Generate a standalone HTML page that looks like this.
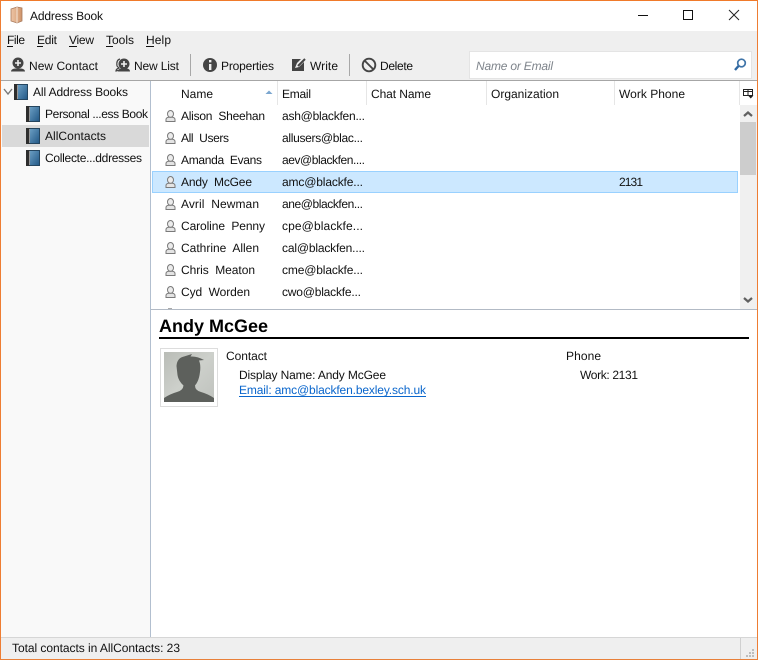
<!DOCTYPE html>
<html><head><meta charset="utf-8"><title>Address Book</title>
<style>
html,body{margin:0;padding:0;width:758px;height:660px;overflow:hidden;background:#fff}
svg{display:block}
text{font-family:"Liberation Sans",sans-serif;font-size:12px;fill:#111;white-space:pre;text-rendering:geometricPrecision}
</style></head><body>
<svg xmlns="http://www.w3.org/2000/svg" width="758" height="660" viewBox="0 0 758 660" xml:space="preserve">
<defs>
<linearGradient id="bk" x1="0" y1="0" x2="1" y2="1"><stop offset="0" stop-color="#6a9dc2"/><stop offset="1" stop-color="#245a88"/></linearGradient>
<linearGradient id="ph" x1="0" y1="0" x2="1" y2="1"><stop offset="0" stop-color="#b9bcb6"/><stop offset=".5" stop-color="#cdd0cb"/><stop offset="1" stop-color="#bfc2bd"/></linearGradient>
<linearGradient id="tb" x1="0" y1="0" x2="1" y2="0"><stop offset="0" stop-color="#eec5a6"/><stop offset="1" stop-color="#cf946a"/></linearGradient>
<g id="book"><rect x="0" y="0" width="14" height="16" fill="#fff"/><rect x="0" y="0" width="3.500" height="16" fill="#2e2e2e"/><rect x="4" y="1" width="9" height="14" fill="url(#bk)"/><path d="M3.500 .5H13.500V15.500H3.500" fill="none" stroke="#24455f"/></g>
<g id="person"><path d="M1 11.500V9.500Q1 7.800 3.500 7.300H7.500Q10 7.800 10 9.500V11.500Z" fill="#e4e4e4" stroke="#7a7a7a"/><ellipse cx="5.500" cy="3.900" rx="3" ry="3.400" fill="#ececec" stroke="#7a7a7a"/></g>
</defs>

<!-- backgrounds -->
<rect width="758" height="660" fill="#fff"/>
<rect x="1" y="31" width="756" height="49" fill="#efefef"/>
<rect x="1" y="80" width="756" height="1" fill="#a6a6a6"/>
<rect x="1" y="81" width="149" height="556" fill="#f9f9f9"/>
<rect x="150" y="81" width="1" height="556" fill="#b2bfcf"/>
<rect x="1" y="637" width="756" height="22" fill="#efefef"/>
<rect x="1" y="637" width="756" height="1" fill="#d6d6d6"/>
<rect x="740" y="638" width="1" height="21" fill="#d0d0d0"/>
<g fill="#bdbdbd"><rect x="752" y="649" width="2" height="2"/><rect x="749" y="652" width="2" height="2"/><rect x="752" y="652" width="2" height="2"/><rect x="746" y="655" width="2" height="2"/><rect x="749" y="655" width="2" height="2"/><rect x="752" y="655" width="2" height="2"/></g>

<!-- title bar -->
<path d="M11 9 17 7 22 8V21L17 23 11 21Z" fill="url(#tb)" stroke="#a87a5c" stroke-width=".8"/>
<path d="M17 7V23" stroke="#f6e4d6"/>
<text x="30" y="20" textLength="73">Address Book</text>
<rect x="638" y="15" width="10" height="1" fill="#111"/>
<rect x="683.500" y="10.500" width="9" height="9" fill="none" stroke="#111"/>
<path d="M729 10 739 20M739 10 729 20" stroke="#222" fill="none"/>

<!-- menu -->
<text x="7" y="44" textLength="18">File</text><rect x="7" y="46" width="6" height="1" fill="#111"/>
<text x="37" y="44" textLength="20">Edit</text><rect x="37" y="46" width="6" height="1" fill="#111"/>
<text x="69" y="44" textLength="25">View</text><rect x="69" y="46" width="8" height="1" fill="#111"/>
<text x="106" y="44" textLength="28">Tools</text><rect x="106" y="46" width="7" height="1" fill="#111"/>
<text x="146" y="44" textLength="25">Help</text><rect x="146" y="46" width="8" height="1" fill="#111"/>

<!-- toolbar -->
<g fill="#444">
<circle cx="18" cy="63" r="5.500" fill="#444"/><path d="M11 71.500Q11 69 15 68.500H21Q25 69 25 71.500Z"/><path d="M18 60V66M15 63H21" stroke="#efefef" stroke-width="1.600"/>
<path d="M120 59Q116 60 117 66L119 68Q116 69 116 71L120 70" fill="none" stroke="#444" stroke-width="1.200"/>
<circle cx="124" cy="64" r="5.500"/><path d="M118 71.500Q118 69 121 68.500H127Q130 69 130 71.500Z"/><path d="M124 61V67M121 64H127" stroke="#efefef" stroke-width="1.600"/>
<circle cx="210" cy="65" r="7"/><rect x="209" y="60" width="2.400" height="2.400" fill="#efefef"/><rect x="209" y="64" width="2.400" height="6" fill="#efefef"/>
<path d="M292 59H301L297 63 295 68 299 67 304 62V71H292Z"/><path d="M298 66 305 59" stroke="#444" stroke-width="2"/>
</g>
<circle cx="369" cy="65" r="6.300" fill="none" stroke="#444" stroke-width="1.900"/><path d="M364.500 60.500 373.500 69.500" stroke="#444" stroke-width="1.900"/>
<text x="29" y="70" textLength="69">New Contact</text>
<text x="134" y="70" textLength="45">New List</text>
<text x="221" y="70" textLength="53">Properties</text>
<text x="310" y="70" textLength="28">Write</text>
<text x="380" y="70" textLength="33">Delete</text>
<rect x="190" y="54" width="1" height="22" fill="#a8a8a8"/>
<rect x="349" y="54" width="1" height="22" fill="#a8a8a8"/>

<!-- search -->
<rect x="469.500" y="51.500" width="282" height="27" fill="#fff" stroke="#e4e4e4"/>
<text x="476" y="70" textLength="77" style="font-style:italic;fill:#7f858c">Name or Email</text>
<circle cx="741.500" cy="63" r="3.800" fill="none" stroke="#3f74a8" stroke-width="1.700"/><path d="M738.500 66 735 70" stroke="#2f68a2" stroke-width="2.400"/>

<!-- sidebar -->
<path d="M4 89 8 94 12 89" fill="none" stroke="#777" stroke-width="1.400"/>
<use href="#book" x="14" y="84"/>
<text x="33" y="96" textLength="95">All Address Books</text>
<rect x="2" y="125" width="147" height="22" fill="#d9d9d9"/>
<use href="#book" x="26" y="106"/><use href="#book" x="26" y="128"/><use href="#book" x="26" y="150"/>
<text x="45" y="118" textLength="103">Personal ...ess Book</text>
<text x="45" y="140" textLength="61">AllContacts</text>
<text x="45" y="162" textLength="97">Collecte...ddresses</text>

<!-- header -->
<g fill="#e6e6e6"><rect x="277" y="81" width="1" height="24"/><rect x="366" y="81" width="1" height="24"/><rect x="486" y="81" width="1" height="24"/><rect x="614" y="81" width="1" height="24"/><rect x="739" y="81" width="1" height="24"/></g>
<path d="M265.500 94 269 90.500 272.500 94Z" fill="#7ba6cf"/>
<text x="181" y="98" textLength="32">Name</text>
<text x="282" y="98" textLength="29">Email</text>
<text x="371" y="98" textLength="60">Chat Name</text>
<text x="491" y="98" textLength="68">Organization</text>
<text x="619" y="98" textLength="66">Work Phone</text>
<path d="M743.500 89.500H752.500V95.500H743.500ZM743.500 91.500H752.500M748 89.500V95.500" fill="none" stroke="#222"/>
<path d="M748 95.500H753.500L750.750 98.500Z" fill="#222"/>

<!-- selected row -->
<rect x="152.500" y="171.500" width="585" height="21" fill="#cce8ff" stroke="#99d1ff"/>

<!-- rows -->
<use href="#person" x="165" y="110"/><use href="#person" x="165" y="132"/><use href="#person" x="165" y="154"/><use href="#person" x="165" y="176"/><use href="#person" x="165" y="198"/><use href="#person" x="165" y="220"/><use href="#person" x="165" y="242"/><use href="#person" x="165" y="264"/><use href="#person" x="165" y="286"/>
<rect x="168" y="308" width="4" height="1" fill="#aaa"/>
<text x="181" y="120" textLength="84">Alison  Sheehan</text><text x="282" y="120" textLength="83">ash@blackfen...</text>
<text x="181" y="142" textLength="48">All  Users</text><text x="282" y="142" textLength="81">allusers@blac...</text>
<text x="181" y="164" textLength="81">Amanda  Evans</text><text x="282" y="164" textLength="83">aev@blackfen....</text>
<text x="181" y="186" textLength="71">Andy  McGee</text><text x="282" y="186" textLength="81">amc@blackfe...</text><text x="619" y="186" textLength="24">2131</text>
<text x="181" y="208" textLength="78">Avril  Newman</text><text x="282" y="208" textLength="81">ane@blackfen...</text>
<text x="181" y="230" textLength="84">Caroline  Penny</text><text x="282" y="230" textLength="81">cpe@blackfe...</text>
<text x="181" y="252" textLength="78">Cathrine  Allen</text><text x="282" y="252" textLength="83">cal@blackfen....</text>
<text x="181" y="274" textLength="74">Chris  Meaton</text><text x="282" y="274" textLength="81">cme@blackfe...</text>
<text x="181" y="296" textLength="69">Cyd  Worden</text><text x="282" y="296" textLength="79">cwo@blackfe...</text>

<!-- scrollbar -->
<rect x="740" y="105" width="17" height="204" fill="#f0f0f0"/>
<rect x="740" y="122" width="16" height="53" fill="#cdcdcd"/>
<path d="M744 116 748 112.500 752 116" fill="none" stroke="#606060" stroke-width="2.200"/>
<path d="M744 298 748 301.500 752 298" fill="none" stroke="#606060" stroke-width="2.200"/>

<!-- splitter -->
<rect x="151" y="309" width="606" height="1" fill="#b2bac5"/>

<!-- detail -->
<text x="159" y="332" textLength="109" style="font-size:18px;font-weight:bold;fill:#000">Andy McGee</text>
<rect x="159" y="337" width="590" height="2" fill="#000"/>
<rect x="160.500" y="348.500" width="57" height="58" fill="#fff" stroke="#ddd"/>
<rect x="164" y="352" width="50" height="50" fill="url(#ph)"/>
<path d="M164 402V398Q170 394 177 392Q183 390.500 183.500 385.500Q178.500 381 177.500 375L176.500 366Q177 358 184 356.500L192 354 190.500 356.500Q197 356 204 360L199 360.500Q201 365 200 372Q199 381 195 385.500Q195 390.500 201 392Q208 394 214 398V402Z" fill="#5d605c"/>
<text x="226" y="360" textLength="41">Contact</text>
<text x="566" y="360" textLength="35">Phone</text>
<text x="239" y="379" textLength="147">Display Name: Andy McGee</text>
<text x="580" y="379" textLength="58">Work: 2131</text>
<text x="239" y="394" textLength="187" style="fill:#0a66cc">Email: amc@blackfen.bexley.sch.uk</text>
<rect x="239" y="396" width="187" height="1" fill="#0a66cc"/>

<!-- status -->
<text x="12" y="652" textLength="168">Total contacts in AllContacts: 23</text>

<!-- window border -->
<rect x="0" y="0" width="758" height="1" fill="#f07a2a"/>
<rect x="0" y="659" width="758" height="1" fill="#e8803a"/>
<rect x="0" y="0" width="1" height="660" fill="#ee7d33"/>
<rect x="757" y="0" width="1" height="660" fill="#ee7d33"/>
</svg>
</body></html>
